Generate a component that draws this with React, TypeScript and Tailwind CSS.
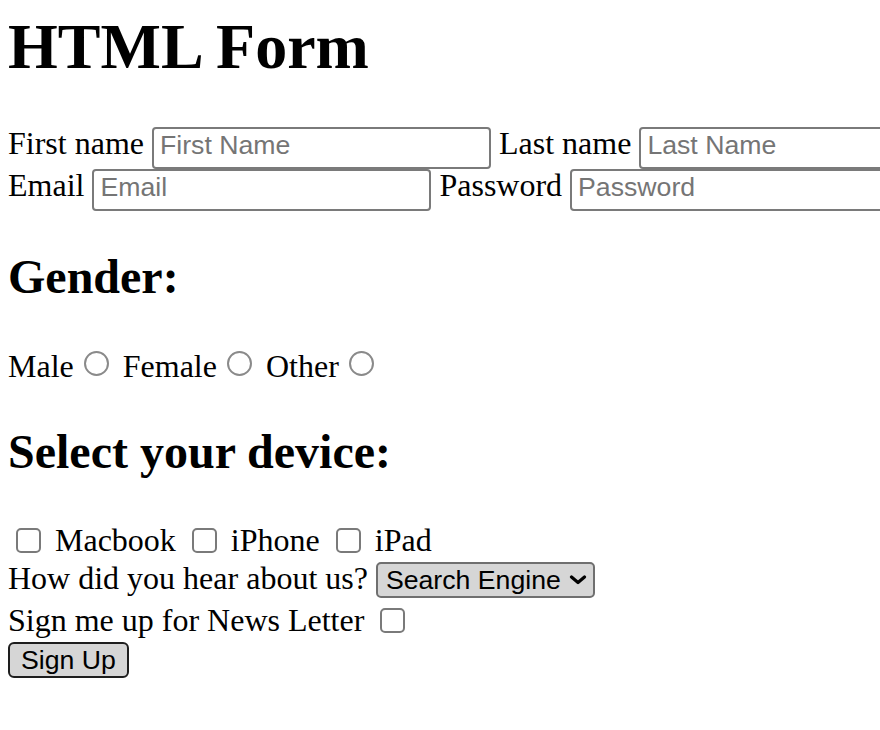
import React from "react";

function TextInput({ placeholder, type = "text" }: { placeholder: string; type?: string }) {
  return (
    <input
      type={type}
      placeholder={placeholder}
      className="inline-block w-[339px] h-[42px] border-2 border-[#7a7a7a] rounded-[4px] bg-white px-[6px] pt-0 pb-[4px] align-baseline font-['Liberation_Sans',Arial,sans-serif] text-[26.67px] leading-normal text-black placeholder:text-[#757575] outline-none"
    />
  );
}

function Radio() {
  return (
    <span
      role="radio"
      aria-checked="false"
      className="inline-block w-[25px] h-[25px] rounded-full border-2 border-[#8a8a8a] bg-white ml-[10px] mr-[6px] align-[1px]"
    />
  );
}

function Check() {
  return (
    <span
      role="checkbox"
      aria-checked="false"
      className="inline-block w-[25px] h-[25px] rounded-[5px] border-2 border-[#7a7a7a] bg-white ml-[8px] mr-[6px] align-[-2px]"
    />
  );
}

export default function App() {
  return (
    <div className="w-[880px] h-[730px] overflow-hidden bg-white pl-[8px] pt-[11px] font-['Liberation_Serif','Times_New_Roman',serif] text-[32px] leading-[36px] text-black">
      <h1 className="text-[64px] font-bold leading-[72px] m-0 mb-[43px] whitespace-nowrap">HTML Form</h1>
      <form className="m-0" onSubmit={(e) => e.preventDefault()}>
        <div className="whitespace-nowrap leading-[34px]">
          <div className="h-[42px]">
            First name <TextInput placeholder="First Name" /> Last name <TextInput placeholder="Last Name" />
          </div>
          <div className="h-[42px]">
            Email <TextInput placeholder="Email" type="email" /> Password <TextInput placeholder="Password" type="password" />
          </div>
        </div>
        <h2 className="text-[48px] font-bold leading-[56px] mt-[39px] mb-[43px]">Gender:</h2>
        <div className="whitespace-nowrap h-[36px]">
          Male<Radio /> Female<Radio /> Other<Radio />
        </div>
        <h2 className="text-[48px] font-bold leading-[56px] mt-[40px] mb-[42px]">Select your device:</h2>
        <div className="whitespace-nowrap h-[36px]">
          <Check /> Macbook <Check /> iPhone <Check /> iPad
        </div>
        <div className="whitespace-nowrap h-[40px] leading-[40px]">
          How did you hear about us?{" "}
          <span className="inline-flex items-center w-[219px] h-[36px] border-2 border-[#6f6f6f] rounded-[5px] bg-[#d6d6d6] pl-[8px] pr-[6px] font-['Liberation_Sans',Arial,sans-serif] text-[26.67px] leading-normal text-black">
            <span className="flex-1">Search Engine</span>
            <svg width="18" height="10" viewBox="0 0 18 10" fill="none" className="shrink-0">
              <path d="M2.5 2 L9 7.5 L15.5 2" stroke="#000" strokeWidth="3.2" strokeLinecap="round" strokeLinejoin="round" />
            </svg>
          </span>
        </div>
        <div className="whitespace-nowrap h-[44px] leading-[44px]">
          Sign me up for News Letter <Check />
        </div>
        <div>
          <button
            type="submit"
            className="flex items-center justify-center w-[121px] h-[36px] border-2 border-[#1e1e1e] rounded-[6px] bg-[#d6d6d6] font-['Liberation_Sans',Arial,sans-serif] text-[26.67px] leading-normal text-black"
          >
            Sign Up
          </button>
        </div>
      </form>
    </div>
  );
}
